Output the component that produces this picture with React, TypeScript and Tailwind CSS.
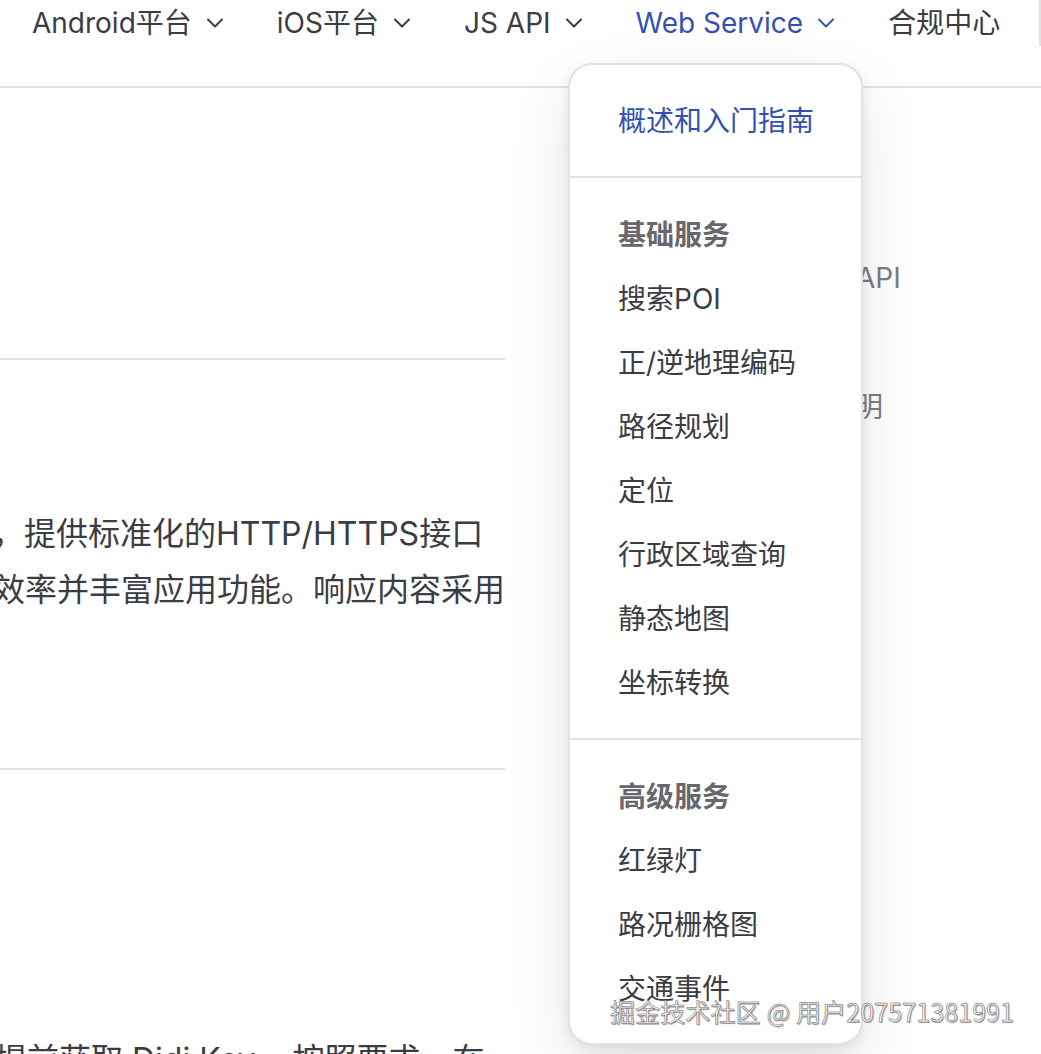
const font = "[font-family:Inter,'Noto_Sans_CJK_SC',sans-serif]";

function Chevron() {
  return (
    <svg width="24" height="24" viewBox="0 0 24 24" fill="none" stroke="currentColor" strokeWidth="2" strokeLinecap="round" strokeLinejoin="round" className="ml-[11px]">
      <path d="M5 8.5l7 7 7-7" />
    </svg>
  );
}

function NavItem({ label, active = false, arrow = true }: { label: string; active?: boolean; arrow?: boolean }) {
  return (
    <div className={`flex items-center h-[46px] font-normal ${active ? "text-[#3451b2]" : "text-[#3c3c43]"}`}>
      <span>{label}</span>
      {arrow && <Chevron />}
    </div>
  );
}

function Item({ label, active = false }: { label: string; active?: boolean }) {
  return (
    <div className={`h-16 leading-[64px] px-12 font-normal whitespace-nowrap ${active ? "text-[#3451b2]" : "text-[#3c3c43]"}`}>{label}</div>
  );
}

function Title({ label }: { label: string }) {
  return <div className="h-16 leading-[64px] px-12 font-bold text-[#67676c]">{label}</div>;
}

export default function App() {
  return (
    <div className={`relative h-[1054px] w-[1041px] overflow-hidden bg-white ${font}`}>
      <header className="h-[88px] border-b-2 border-[#e2e2e3] text-[28px] relative">
        <div className="flex pl-8 gap-[50px]">
          <NavItem label="Android平台" />
          <NavItem label="iOS平台" />
          <NavItem label="JS API" />
          <NavItem label="Web Service" active />
          <NavItem label="合规中心" arrow={false} />
        </div>
        <div className="absolute right-0 top-0 h-[46px] w-[2px] bg-[#e2e2e3]" />
      </header>

      <div className="flex">
        <main className="w-[505px] shrink-0 overflow-hidden text-[32px] leading-[56px] text-[#3c3c43] whitespace-nowrap">
          <div className="h-[272px] border-b-2 border-[#e2e2e3]" />
          <div className="h-[410px] border-b-2 border-[#e2e2e3] pt-[146px]">
            <div className="-ml-[8px]">，提供标准化的HTTP/HTTPS接口</div>
            <div className="flex justify-end">效率并丰富应用功能。响应内容采用</div>
          </div>
          <div className="pt-[262px] -ml-[5px]">提前获取 Didi Key<span className="ml-[5px]">，按照要求，在</span></div>
        </main>
        <aside className="ml-[357px] pt-[158px] text-[28px] text-[#7c7c82] whitespace-nowrap overflow-hidden">
          <div className="h-16 leading-[64px] -ml-[6px]">API</div>
          <div className="h-16 leading-[64px] mt-[65px] -ml-[7px]">明</div>
        </aside>
      </div>

      <div className="absolute left-[568px] top-[63px] w-[295px] rounded-3xl border-2 border-[#e2e2e3] bg-white text-[28px] shadow-[0_24px_64px_rgba(0,0,0,0.1),0_4px_12px_rgba(0,0,0,0.08)]">
        <div className="pt-6 pb-[23px]">
          <Item label="概述和入门指南" active />
        </div>
        <div className="pt-[25px] pb-[23px] border-t-2 border-[#e2e2e3]">
          <Title label="基础服务" />
          <Item label="搜索POI" />
          <Item label="正/逆地理编码" />
          <Item label="路径规划" />
          <Item label="定位" />
          <Item label="行政区域查询" />
          <Item label="静态地图" />
          <Item label="坐标转换" />
        </div>
        <div className="pt-[25px] pb-[22px] border-t-2 border-[#e2e2e3]">
          <Title label="高级服务" />
          <Item label="红绿灯" />
          <Item label="路况栅格图" />
          <Item label="交通事件" />
        </div>
      </div>

      <div className="absolute left-[610px] top-[993px] text-[25px] tracking-[0.12px] leading-[36px] whitespace-nowrap text-[#f2f2f2] [-webkit-text-stroke:0.5px_#666] [text-shadow:1px_1px_1px_rgba(0,0,0,0.35)] [font-family:'Noto_Sans_CJK_SC',sans-serif]">
        掘金技术社区 @ 用户207571381991
      </div>
    </div>
  );
}
